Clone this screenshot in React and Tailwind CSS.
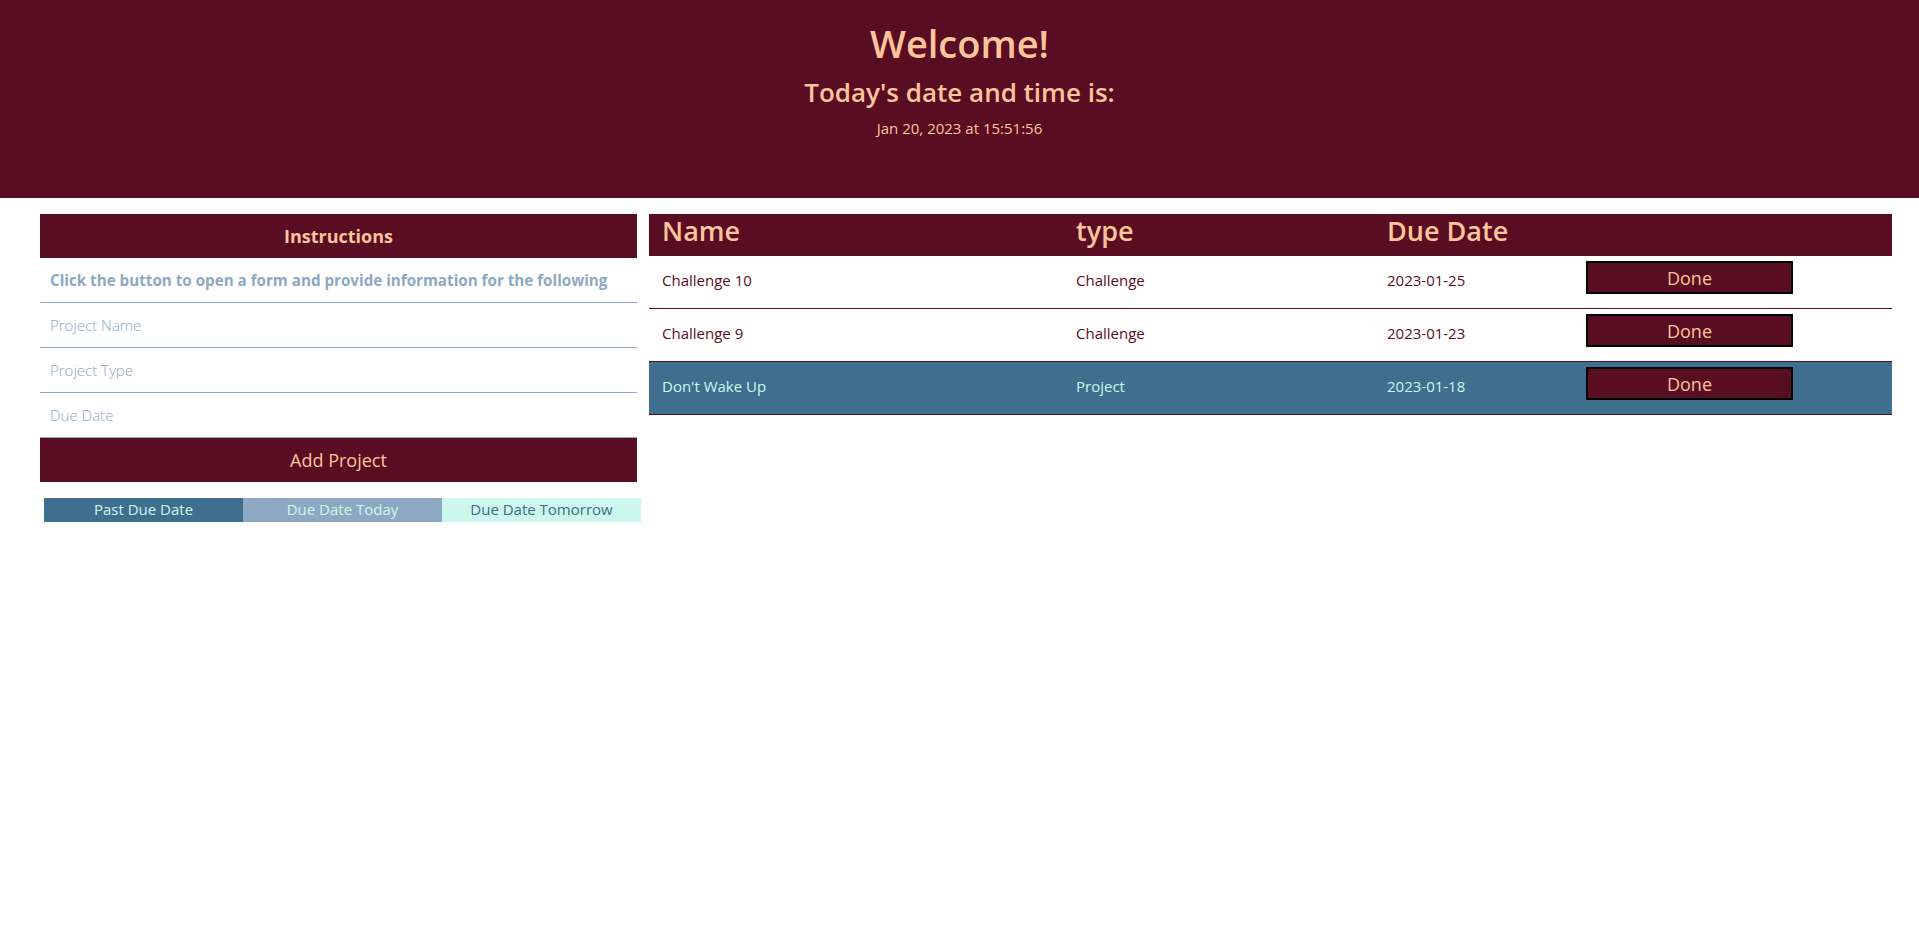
import React from "react";

const projects = [
  { name: "Challenge 10", type: "Challenge", due: "2023-01-25", status: "future" },
  { name: "Challenge 9", type: "Challenge", due: "2023-01-23", status: "future" },
  { name: "Don't Wake Up", type: "Project", due: "2023-01-18", status: "past" },
];

const InputRow = ({ placeholder }) => (
  <div className="h-[45px] flex items-center border-b border-[#8ea8c3] px-[10px]">
    <span className="text-[15px] leading-[20px] font-light text-[#8ea8c3]">{placeholder}</span>
  </div>
);

const ProjectRow = ({ project }) => {
  const isPast = project.status === "past";
  return (
    <div
      className={
        isPast
          ? "grid grid-cols-[414px_311px_212px_1fr] items-center h-[53px] border-b border-[#590d22] bg-[#406e8e] text-[#cbf7ed]"
          : "grid grid-cols-[414px_311px_212px_1fr] items-center h-[53px] border-b border-[#590d22] bg-white text-[#590d22]"
      }
    >
      <div className="pl-[13px] mb-[5px] text-[15px] leading-[20px]">{project.name}</div>
      <div className="pl-[13px] mb-[5px] text-[15px] leading-[20px]">{project.type}</div>
      <div className="pl-[13px] mb-[5px] text-[15px] leading-[20px]">{project.due}</div>
      <div className="self-start mt-[5px]">
        <button className="w-[207px] h-[33px] bg-[#590d22] border-2 border-black text-[#ffc49b] text-[18px] leading-[24px]">
          Done
        </button>
      </div>
    </div>
  );
};

export default function App() {
  return (
    <div className="min-h-screen bg-white font-['Open_Sans',sans-serif]">
      {/* Header */}
      <header className="h-[198px] bg-[#590d22] flex flex-col items-center pt-[19px] text-[#ffc49b]">
        <h1 className="text-[38px] leading-[48px] font-semibold">Welcome!</h1>
        <h2 className="mt-[9px] text-[26px] leading-[32px] font-semibold">Today's date and time is:</h2>
        <p className="mt-[10px] text-[15px] leading-[20px]">Jan 20, 2023 at 15:51:56</p>
      </header>

      <main className="flex items-start gap-[12px] pl-[40px] pt-[16px]">
        {/* Left panel */}
        <section className="w-[597px]">
          <div className="h-[44px] bg-[#590d22] flex items-center justify-center">
            <h3 className="text-[18px] leading-[24px] font-bold text-[#ffc49b]">Instructions</h3>
          </div>
          <div className="h-[45px] flex items-center border-b border-[#8ea8c3] px-[10px]">
            <p className="text-[15.2px] leading-[20px] font-bold text-[#8ea8c3]">
              Click the button to open a form and provide information for the following
            </p>
          </div>
          <InputRow placeholder="Project Name" />
          <InputRow placeholder="Project Type" />
          <InputRow placeholder="Due Date" />
          <button className="w-full h-[44px] bg-[#590d22] text-[#ffc49b] text-[18px] leading-[24px]">
            Add Project
          </button>

          <div className="mt-[16px] ml-[4px] w-[597px] grid grid-cols-3 h-[24px] text-[15px] leading-[22px] text-center">
            <div className="bg-[#406e8e] text-[#cbf7ed]">Past Due Date</div>
            <div className="bg-[#8ea8c3] text-[#cbf7ed]">Due Date Today</div>
            <div className="bg-[#cbf7ed] text-[#406e8e]">Due Date Tomorrow</div>
          </div>
        </section>

        {/* Project table */}
        <section className="w-[1243px]">
          <div className="grid grid-cols-[414px_311px_212px_1fr] h-[42px] bg-[#590d22] text-[#ffc49b]">
            <div className="pl-[13px] text-[27px] leading-[34px] font-semibold">Name</div>
            <div className="pl-[13px] text-[27px] leading-[34px] font-semibold">type</div>
            <div className="pl-[13px] text-[27px] leading-[34px] font-semibold">Due Date</div>
            <div />
          </div>
          {projects.map((project) => (
            <ProjectRow key={project.name} project={project} />
          ))}
        </section>
      </main>
    </div>
  );
}
